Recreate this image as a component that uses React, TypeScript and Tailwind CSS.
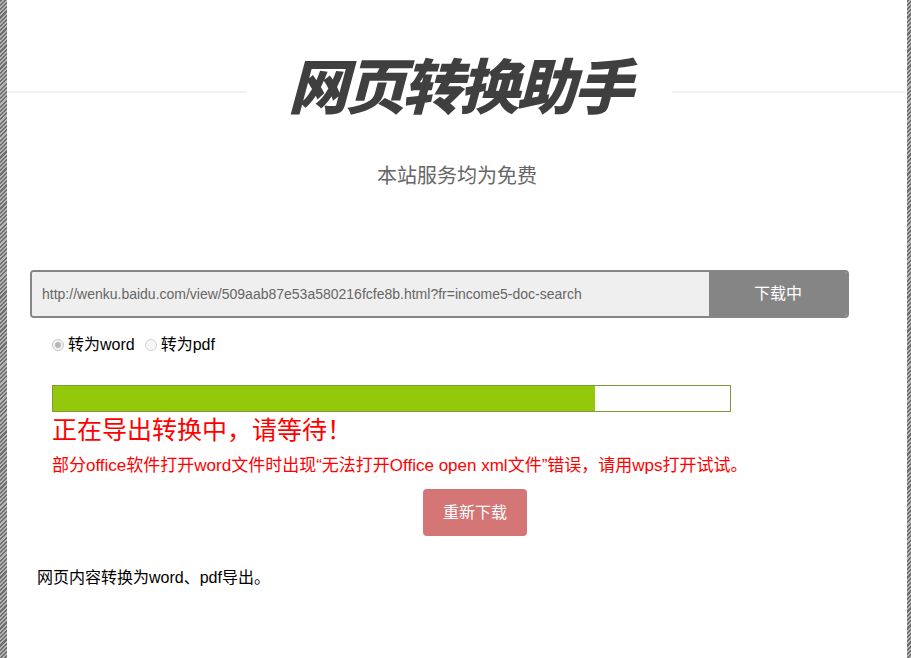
import React from "react";

const stripe =
  "bg-[repeating-linear-gradient(135deg,#6f6f6f_0px,#6f6f6f_1.5px,#b5b5b5_1.5px,#b5b5b5_3px)]";

export default function App() {
  return (
    <div
      className="flex h-[658px] w-[911px] overflow-hidden bg-white [text-spacing-trim:space-all]"
      style={{ fontFamily: '"Liberation Sans", "Noto Sans CJK SC", sans-serif' }}
    >
      <div className={`w-[7px] shrink-0 ${stripe}`} />
      <div className="flex w-[900px] shrink-0 flex-col bg-white">
        {/* Title */}
        <div className="mt-[53px] flex h-[64px] items-start">
          <div className="mt-[38px] h-[2px] w-[240px] bg-[#f2f2f2]" />
          <div className="flex w-[425px] justify-center">
            <span
              className="inline-block translate-x-[6px] skew-x-[-15deg] text-[60px] font-black leading-none tracking-[-3px] text-[#3f3f3f]"
              style={{ fontFamily: '"Noto Sans CJK SC", sans-serif' }}
            >
              网页转换助手
            </span>
          </div>
          <div className="mt-[38px] h-[2px] flex-1 bg-[#f2f2f2]" />
        </div>

        {/* Subtitle */}
        <div className="mt-[46px] text-center text-[20px] leading-[26px] text-[#666]">
          本站服务均为免费
        </div>

        {/* URL input row */}
        <div className="ml-[23px] mt-[81px] flex h-[48px] w-[819px] overflow-hidden rounded-[4px] border-2 border-[#858585]">
          <div className="flex flex-1 items-center bg-[#efefef] pl-[10px] text-[14px] text-[#666]">
            http://wenku.baidu.com/view/509aab87e53a580216fcfe8b.html?fr=income5-doc-search
          </div>
          <div className="flex w-[138px] items-center justify-center bg-[#858585] text-[16px] text-white">
            下载中
          </div>
        </div>

        {/* Radios */}
        <div className="ml-[45px] mt-[17px] flex items-center text-[16px] leading-[20px] text-black">
          <label className="flex items-center">
            <span className="mr-[4px] flex h-[12px] w-[12px] items-center justify-center rounded-full border border-[#c8c8c8] bg-[#f4f4f4]">
              <span className="h-[6px] w-[6px] rounded-full bg-[#b8b8b8]" />
            </span>
            转为word
          </label>
          <label className="ml-[10px] flex items-center">
            <span className="mr-[4px] h-[12px] w-[12px] rounded-full border border-[#d4d4d4] bg-[#f6f6f6]" />
            转为pdf
          </label>
        </div>

        {/* Progress */}
        <div className="ml-[45px] mt-[30px] h-[27px] w-[679px] border border-[#7d9a3c] bg-white">
          <div className="h-full bg-[#93c90a]" style={{ width: "80%" }} />
        </div>

        <div className="ml-[45px] mt-[2px] text-[25px] leading-[32px] text-[#ff0000]">
          正在导出转换中，请等待！
        </div>
        <div className="ml-[45px] mt-[9px] text-[17px] leading-[22px] text-[#ff0000]">
          部分office软件打开word文件时出现“无法打开Office open xml文件”错误，请用wps打开试试。
        </div>

        <div className="mt-[12px] flex justify-center pl-[36px]">
          <button className="h-[47px] w-[104px] rounded-[4px] bg-[#d47676] text-[16px] text-white">
            重新下载
          </button>
        </div>

        <div className="ml-[30px] mt-[32px] text-[16px] leading-[20px] text-black">
          网页内容转换为word、pdf导出。
        </div>
      </div>
      <div className={`flex-1 ${stripe}`} />
    </div>
  );
}
